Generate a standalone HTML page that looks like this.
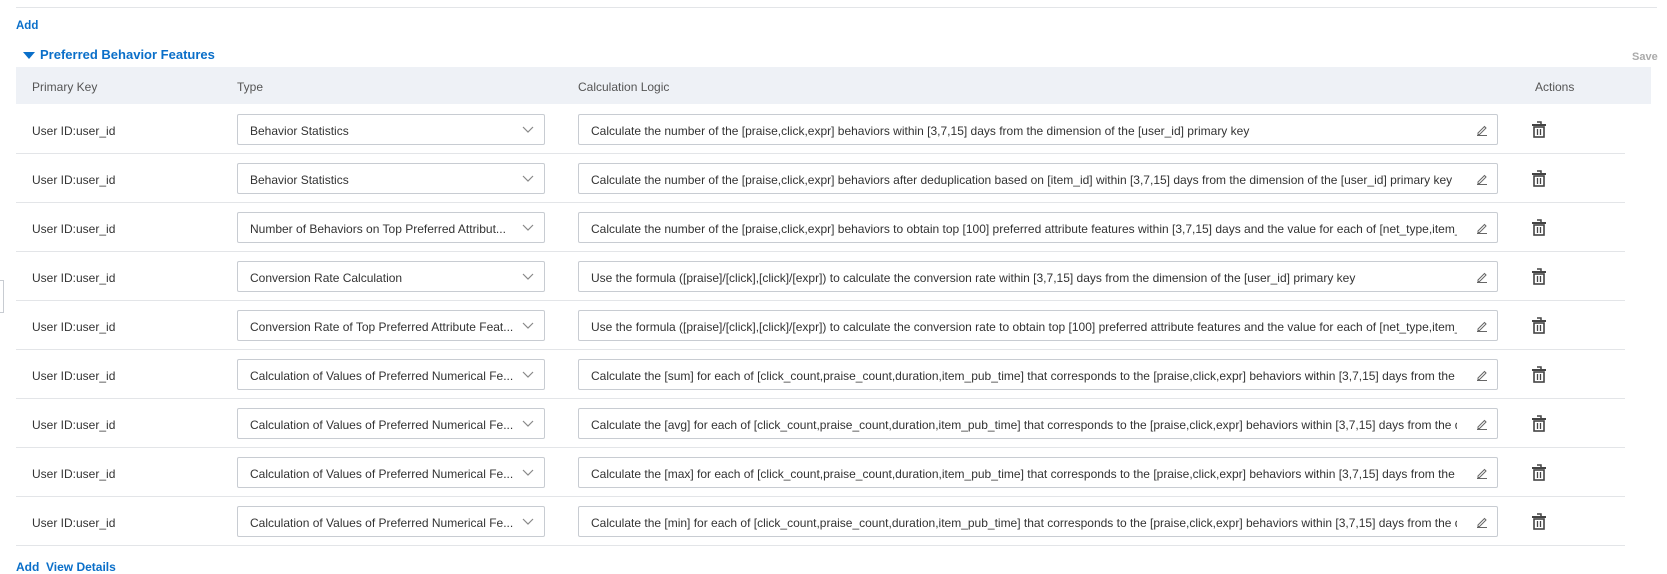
<!DOCTYPE html>
<html><head><meta charset="utf-8"><style>
*{box-sizing:border-box;margin:0;padding:0}
body{width:1667px;height:571px;background:#fff;font-family:"Liberation Sans",sans-serif;font-size:12px;color:#333;position:relative;overflow:hidden}
.abs{position:absolute}
.blue{color:#0a6fc9}
.hdr{position:absolute;left:16px;top:67px;width:1635px;height:37px;background:#eef1f6}
.hdr span{position:absolute;top:13px;color:#555}
.row{position:absolute;left:16px;width:1609px;height:49px;border-bottom:1px solid #e3e5e8}
.pk{position:absolute;left:16px;top:19px}
.sel{position:absolute;left:221px;top:9px;width:308px;height:31px;border:1px solid #c8ccd2;border-radius:2px;padding:0 12px;line-height:32px;white-space:nowrap;overflow:hidden}
.sel svg{position:absolute;right:10px;top:11px}
.inp{position:absolute;left:562px;top:9px;width:920px;height:31px;border:1px solid #c8ccd2;border-radius:2px;padding:0 40px 0 12px;line-height:32px;white-space:nowrap;overflow:hidden}
.inp .tx{overflow:hidden;display:block}
.inp svg{position:absolute;right:9px;top:9px}
.tr{position:absolute;left:1516px;top:16px}
</style></head><body>
<div class="abs" style="left:16px;top:7px;width:1641px;height:1px;background:#e3e5e8"></div>
<div class="abs blue" style="left:16px;top:20px;font-size:11.5px;font-weight:bold">Add</div>
<svg class="abs" style="left:23px;top:52px" width="12" height="8"><path d="M0 0H12L6 7Z" fill="#0a6fc9"/></svg>
<div class="abs blue" style="left:40px;top:47px;font-size:13px;font-weight:bold">Preferred Behavior Features</div>
<div class="abs" style="left:1632px;top:51px;color:#aaa;font-weight:bold;font-size:11px">Save</div>
<div class="hdr"><span style="left:16px">Primary Key</span><span style="left:221px">Type</span><span style="left:562px">Calculation Logic</span><span style="left:1519px">Actions</span></div>
<div class="abs" style="left:-2px;top:280px;width:6px;height:33px;border:1px solid #c8ccd2"></div>
<div id="rows"></div>
<div class="abs blue" style="left:16px;top:560px;font-weight:bold">Add&nbsp;&nbsp;View Details</div>
<script>
var d=[["Behavior Statistics","Calculate the number of the [praise,click,expr] behaviors within [3,7,15] days from the dimension of the [user_id] primary key"],
["Behavior Statistics","Calculate the number of the [praise,click,expr] behaviors after deduplication based on [item_id] within [3,7,15] days from the dimension of the [user_id] primary key"],
["Number of Behaviors on Top Preferred Attribut...","Calculate the number of the [praise,click,expr] behaviors to obtain top [100] preferred attribute features within [3,7,15] days and the value for each of [net_type,item_type]"],
["Conversion Rate Calculation","Use the formula ([praise]/[click],[click]/[expr]) to calculate the conversion rate within [3,7,15] days from the dimension of the [user_id] primary key"],
["Conversion Rate of Top Preferred Attribute Feat...","Use the formula ([praise]/[click],[click]/[expr]) to calculate the conversion rate to obtain top [100] preferred attribute features and the value for each of [net_type,item_type]"],
["Calculation of Values of Preferred Numerical Fe...","Calculate the [sum] for each of [click_count,praise_count,duration,item_pub_time] that corresponds to the [praise,click,expr] behaviors within [3,7,15] days from the dimension"],
["Calculation of Values of Preferred Numerical Fe...","Calculate the [avg] for each of [click_count,praise_count,duration,item_pub_time] that corresponds to the [praise,click,expr] behaviors within [3,7,15] days from the dimension"],
["Calculation of Values of Preferred Numerical Fe...","Calculate the [max] for each of [click_count,praise_count,duration,item_pub_time] that corresponds to the [praise,click,expr] behaviors within [3,7,15] days from the dimension"],
["Calculation of Values of Preferred Numerical Fe...","Calculate the [min] for each of [click_count,praise_count,duration,item_pub_time] that corresponds to the [praise,click,expr] behaviors within [3,7,15] days from the dimension"]];
var h="";
d.forEach(function(r,i){
h+='<div class="row" style="top:'+(105+49*i)+'px"><span class="pk">User ID:user_id</span>'+
'<div class="sel">'+r[0]+'<svg width="12" height="8"><path d="M1 1L6 6L11 1" fill="none" stroke="#888" stroke-width="1.2"/></svg></div>'+
'<div class="inp"><span class="tx">'+r[1]+'</span><svg width="12" height="12"><path d="M2 9L8.5 2.5L10 4L3.5 10.5H2Z M1 11.5H11" fill="none" stroke="#666" stroke-width="1"/></svg></div>'+
'<svg class="tr" width="14" height="17"><path d="M5 1H9V3" fill="none" stroke="#444" stroke-width="1.5"/><rect x="0" y="3" width="14" height="2" fill="#444"/><rect x="2" y="6" width="10" height="10" fill="none" stroke="#444" stroke-width="1.6"/><path d="M5.5 8V14M8.5 8V14" stroke="#444" stroke-width="1.3"/></svg></div>';
});
document.getElementById("rows").innerHTML=h;
</script>
</body></html>
